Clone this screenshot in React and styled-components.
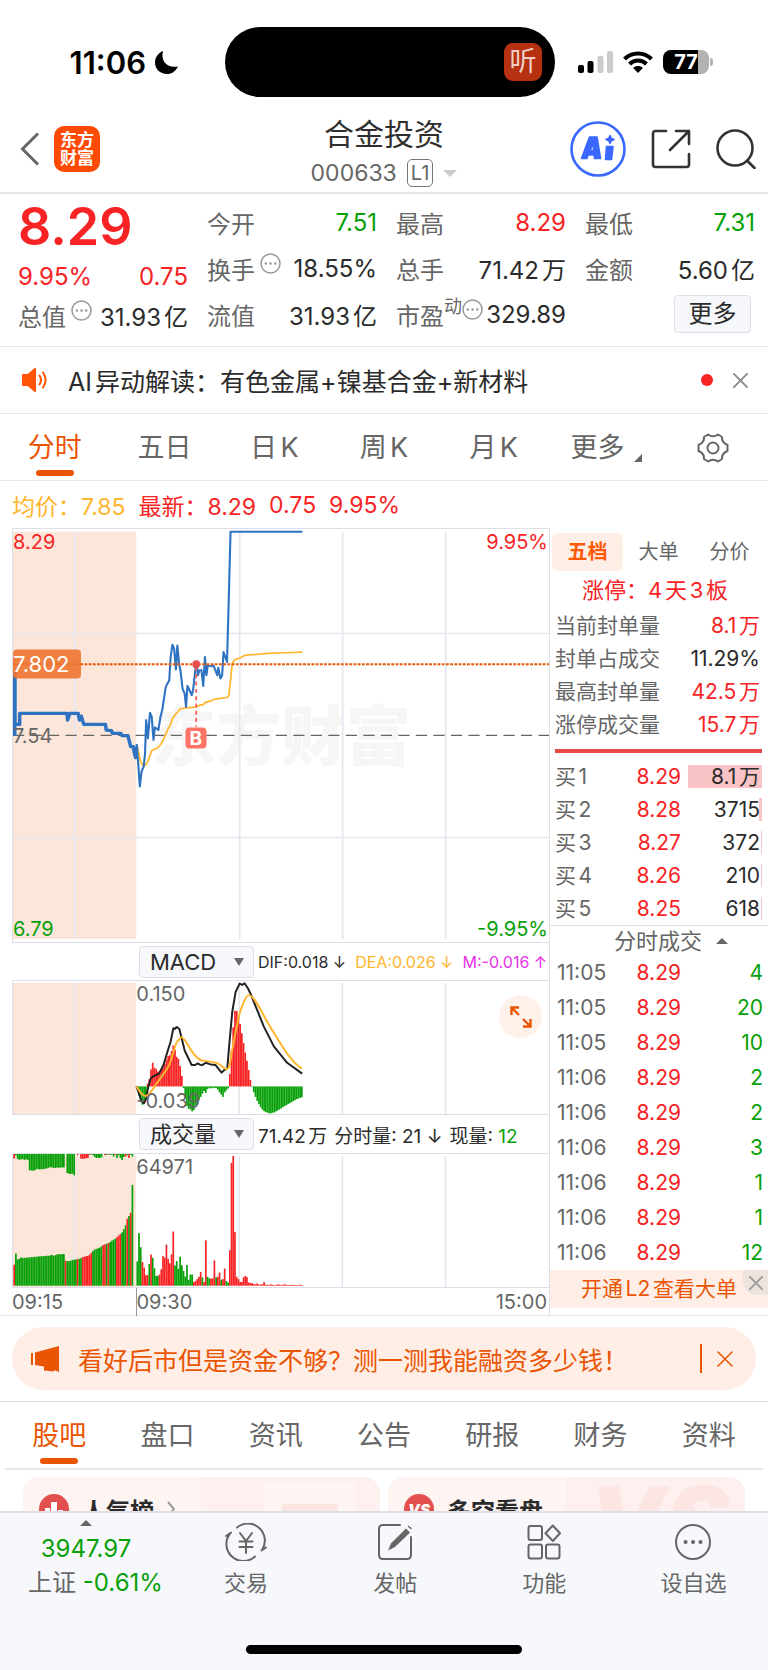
import styled, { createGlobalStyle, css } from 'styled-components'

const RED = '#f72324'
const GREEN = '#08a008'
const ORANGE = '#ea5504'
const YELLOW = '#ffb62e'
const DARK = '#2b2b2b'
const GRAY = '#666'
const LINE = '#e6e6ea'

const tones = { red: RED, green: GREEN, orange: ORANGE, yellow: YELLOW, dark: DARK, gray: GRAY, pink: '#e832e8' }

const GlobalStyle = createGlobalStyle`
  * { box-sizing: border-box; }
  body {
    margin: 0;
    background: #fff;
    color: ${DARK};
    font-family: Inter, "Noto Sans CJK SC", sans-serif;
    text-autospace: normal;
  }
  button, select {
    margin: 0;
    padding: 0;
    border: 0;
    background: none;
    color: inherit;
    font: inherit;
    cursor: pointer;
  }
  a { color: inherit; text-decoration: none; }
  svg { display: block; flex: none; }
  table { width: 100%; border-collapse: collapse; }
  td, th { padding: 0; font-weight: 400; }
`

const Page = styled.div`
  display: flex;
  flex-direction: column;
  height: 100vh;
`

const Content = styled.main`
  flex: 1;
  min-height: 0;
  overflow: hidden;
`

const Tone = styled.span`
  color: ${p => tones[p.$tone]};
`

/* status bar */

const StatusBar = styled.div`
  display: grid;
  grid-template-columns: 225fr 330px 213fr;
  align-items: center;
  padding-top: 27px;
`

const Clock = styled.div`
  display: flex;
  align-items: center;
  justify-content: flex-end;
  gap: 8px;
  padding-right: 46px;
  color: #000;
  font-size: 31px;
  font-weight: 600;
  white-space: nowrap;
`

const Island = styled.div`
  display: flex;
  align-items: center;
  justify-content: flex-end;
  height: 70px;
  padding-right: 13px;
  border-radius: 35px;
  background: #000;
`

const ListenBadge = styled.div`
  width: 38px;
  border-radius: 9px;
  background: #b5310f;
  color: #efcfc5;
  font-size: 27px;
  line-height: 38px;
  text-align: center;
`

const Signals = styled.div`
  display: flex;
  align-items: center;
  gap: 10px;
  padding-left: 23px;
`

const Battery = styled.div`
  display: flex;
  align-items: center;
  gap: 1px;
`

const BatteryBody = styled.div`
  width: 46px;
  border-radius: 8px;
  background: linear-gradient(to right, #000 77%, #b3b3b3 77%);
  color: #fff;
  font-size: 20px;
  font-weight: 700;
  line-height: 24px;
  text-align: center;
`

const BatteryTip = styled.div`
  width: 3px;
  height: 8px;
  border-radius: 0 3px 3px 0;
  background: #b3b3b3;
`

/* title bar */

const Header = styled.header`
  display: grid;
  grid-template-columns: 1fr auto 1fr;
  align-items: center;
  padding: 17px 12px 0;
  border-bottom: 2px solid ${LINE};
`

const HeaderSide = styled.div`
  display: flex;
  align-items: center;
  justify-content: ${p => (p.$end ? 'flex-end' : 'flex-start')};
  gap: ${p => (p.$end ? 25 : 14)}px;
  padding: 0 0 8px ${p => (p.$end ? 0 : 8)}px;
`

const Logo = styled.a`
  display: block;
  padding: 5px 0;
  width: 46px;
  border-radius: 10px;
  background: #ff4a03;
  color: #fff;
  font-size: 17px;
  font-weight: 700;
  line-height: 18px;
  text-align: center;
`

const Title = styled.h1`
  margin: 0;
  color: #2f2f2f;
  font-size: 30px;
  font-weight: 400;
  line-height: 40px;
  text-align: center;
`

const SubTitle = styled.div`
  display: flex;
  align-items: center;
  justify-content: center;
  gap: 10px;
  height: 38px;
  color: ${GRAY};
  font-size: 23px;
`

const Level = styled.span`
  padding: 0 3px;
  border: 1px solid #777;
  border-radius: 5px;
  font-size: 20px;
  line-height: 26px;
`

const Triangle = styled.i`
  width: 0;
  height: 0;
  border: ${p => p.$size || 6}px solid transparent;
  ${p => (p.$up ? 'border-top-width: 0; border-bottom-color' : 'border-bottom-width: 0; border-top-color')}: ${p => p.$color || GRAY};
`

/* quote block */

const Quote = styled.section`
  display: grid;
  grid-template-columns: repeat(4, 1fr);
  column-gap: 19px;
  padding: 5px 13px 9px 18px;
  border-bottom: 1px solid ${LINE};
  font-size: 24px;
`

const QuoteColumn = styled.div`
  display: grid;
  align-content: start;
  grid-template-rows: ${p => (p.$main ? '56px 42px 36px' : 'repeat(3, 46px)')};
`

const Price = styled.strong`
  color: ${RED};
  font-size: 52px;
  font-weight: 600;
  line-height: 56px;
`

const Stat = styled.div`
  display: flex;
  align-items: center;
  justify-content: space-between;
  white-space: nowrap;
  color: ${p => tones[p.$tone || 'dark']};
`

const StatLabel = styled.span`
  display: flex;
  align-items: center;
  gap: 5px;
  color: ${GRAY};

  sup {
    align-self: flex-start;
    margin: 0 -5px;
    font-size: 18px;
    line-height: 20px;
  }
`

const MoreButton = styled.button`
  align-self: center;
  justify-self: end;
  width: 77px;
  height: 38px;
  margin-right: 4px;
  border: 1px solid #dcdfe6;
  border-radius: 4px;
  background: #f7f8fb;
  line-height: 34px;
`

const Notice = styled.section`
  display: flex;
  align-items: center;
  height: 67px;
  padding: 0 20px 0 22px;
  border-bottom: 1px solid ${LINE};
  font-size: 25px;
`

const NoticeText = styled.a`
  flex: 1;
  padding-left: 21px;
`

const RedDot = styled.i`
  width: 12px;
  height: 12px;
  margin-right: 20px;
  border-radius: 50%;
  background: ${RED};
`

/* tabs */

const Tabs = styled.nav`
  display: grid;
  grid-template-columns: repeat(7, 1fr);
  height: ${p => (p.$inset ? 68 : 67)}px;
  margin: 0 ${p => (p.$inset ? 5 : 0)}px;
  border-bottom: ${p => (p.$inset ? 2 : 1)}px solid ${LINE};
`

const Tab = styled.button`
  display: flex;
  flex-direction: column;
  align-items: center;
  justify-content: flex-end;
  color: ${p => (p.$active ? ORANGE : GRAY)};
  font-size: 27px;
  line-height: 40px;

  &::after {
    content: '';
    width: 38px;
    height: 6px;
    margin: 2px 0 4px;
    border-radius: 3px;
    background: ${p => (p.$active ? ORANGE : 'transparent')};
  }
`

const TabMore = styled.span`
  display: flex;
  align-items: flex-end;
  gap: 10px;
  padding-left: 6px;

  svg { margin-bottom: 6px; }
`

const LatestLine = styled.div`
  display: flex;
  align-items: center;
  gap: 13px;
  height: 47px;
  padding-left: 12px;
  color: ${RED};
  font-size: 23px;
`

/* charts */

const Board = styled.section`
  display: grid;
  grid-template-columns: 1fr 219px;
  padding-left: 12px;
  border-bottom: 1px solid ${LINE};
`

const Charts = styled.div`
  min-width: 0;
`

const Plot = styled.div`
  position: relative;
  height: ${p => p.$height}px;
  border: solid #dcdfe6;
  border-width: 1px 0 1px 1px;

  > svg {
    width: 100%;
    height: 100%;
  }
`

const corners = {
  topLeft: 'top: 0; left: 0;',
  topRight: 'top: 0; right: 1px;',
  bottomLeft: 'bottom: 0; left: 0;',
  bottomRight: 'bottom: 0; right: 1px;',
  open: 'top: 0; left: 23%;',
  openBottom: 'bottom: 0; left: 23%;',
}

const AxisLabel = styled.span`
  position: absolute;
  ${p => corners[p.$at]}
  color: ${p => tones[p.$tone || 'gray']};
  font-size: 20px;
  line-height: 26px;
`

const Watermark = styled.div`
  position: absolute;
  top: 50%;
  left: 50%;
  transform: translate(-50%, -50%);
  color: #f6f6f7;
  font-size: 65px;
  font-weight: 900;
  line-height: 65px;
  white-space: nowrap;
`

const LineLabel = styled.span`
  position: absolute;
  top: ${p => p.$top};
  left: 0;
  transform: translateY(-50%);
  color: ${GRAY};
  font-size: 20px;
  line-height: 26px;

  ${p => p.$cost && css`
    width: 68px;
    border-radius: 4px;
    background: rgba(238, 115, 48, 0.9);
    color: #fff;
    font-size: 22px;
    line-height: 29px;
  `}
`

const BuyMark = styled.span`
  position: absolute;
  top: 50.6%;
  left: 34.1%;
  width: 21px;
  transform: translate(-50%, -50%);
  border-radius: 4px;
  background: #ff7468;
  color: #fff;
  font-size: 19px;
  font-weight: 700;
  line-height: 21px;
  text-align: center;
`

const ExpandButton = styled.button`
  position: absolute;
  top: 14px;
  right: 7px;
  display: grid;
  place-items: center;
  width: 43px;
  height: 43px;
  border-radius: 50%;
  background: #fef1ea;
`

const Toolbar = styled.div`
  display: flex;
  align-items: center;
  height: ${p => p.$height}px;
  padding-left: 127px;
  gap: 4px;
  font-size: ${p => p.$size}px;
  white-space: nowrap;
`

const Readings = styled.div`
  display: flex;
  gap: ${p => p.$gap}px;
`

const SelectBox = styled.label`
  position: relative;
  flex: none;
  width: 115px;

  select {
    display: block;
    width: 100%;
    height: 32px;
    padding-left: 10px;
    border: 1px solid #dcdfe6;
    border-radius: 4px;
    background: #f7f8fb;
    appearance: none;
    font-size: 22px;
  }

  i {
    position: absolute;
    top: 12px;
    right: 10px;
    border-width: 8px 5px 0;
    pointer-events: none;
  }
`

const TimeAxis = styled.div`
  display: grid;
  grid-template-columns: 23fr 77fr;
  height: 27px;
  color: ${GRAY};
  font-size: 20px;
  line-height: 28px;

  span:last-child {
    display: flex;
    justify-content: space-between;
    padding-right: 2px;
    border-left: 1px solid #999;
  }
`

/* order book */

const Book = styled.aside`
  padding: 5px 0;
  border-left: 1px solid #dcdfe6;
  font-size: 21px;
`

const BookTabs = styled.div`
  display: grid;
  grid-template-columns: repeat(3, 71px);
  padding-left: 2px;
`

const BookTab = styled.button`
  border-radius: 6px;
  background: ${p => (p.$active ? '#feeee6' : 'none')};
  color: ${p => (p.$active ? '#ff5a05' : GRAY)};
  font-size: 20px;
  font-weight: ${p => (p.$active ? 700 : 400)};
  line-height: 38px;
`

const LimitUp = styled.div`
  color: ${RED};
  font-size: 22px;
  line-height: 38px;
  text-align: center;
  padding-right: 8px;
`

const BookTable = styled.table`
  td, th {
    height: ${p => p.$row}px;
    line-height: ${p => p.$row}px;
    text-align: right;
    white-space: nowrap;
  }

  th {
    padding-left: ${p => p.$inset}px;
    color: ${GRAY};
    text-align: left;
  }

  td:nth-child(3) {
    width: 87px;
  }

  td:last-child {
    padding-right: ${p => p.$end}px;
  }
`

const VolumeBar = styled.span`
  display: block;
  margin-left: 7px;
  padding-right: 2px;
  line-height: 23px;
  background: linear-gradient(to left, #fac4c6 ${p => p.$share}%, transparent ${p => p.$share}%);
`

const RedRule = styled.hr`
  height: 4px;
  margin: 8px 6px 7px 5px;
  border: 0;
  background: #e94848;
`

const TradesTitle = styled.button`
  display: flex;
  align-items: center;
  justify-content: center;
  gap: 14px;
  width: 100%;
  height: 30px;
  padding-left: 24px;
  border-top: 1px solid #dcdfe6;
  color: ${GRAY};
  font-size: 22px;
  line-height: 28px;
`

const LevelTwo = styled.div`
  display: flex;
  background: #feeee6;
  color: ${ORANGE};
  line-height: 38px;

  a {
    flex: 1;
    padding-left: 31px;
    white-space: nowrap;
  }
`

const CornerClose = styled.button`
  display: grid;
  place-items: center;
  width: 25px;
  height: 25px;
  border-bottom-left-radius: 14px;
  background: #ece2de;
`

/* promo and lower tabs */

const Promo = styled.section`
  padding: 11px 12px;
  border-bottom: 1px solid #dedee2;
`

const PromoPill = styled.div`
  display: flex;
  align-items: center;
  height: 63px;
  padding: 0 23px 0 19px;
  border-radius: 32px;
  background: #feeee6;
  color: ${ORANGE};
  font-size: 25px;

  a {
    flex: 1;
    padding-left: 19px;
  }

  button {
    display: flex;
    align-items: center;
    height: 29px;
    padding-left: 15px;
    border-left: 2px solid ${ORANGE};
  }
`

const Cards = styled.div`
  display: grid;
  grid-template-columns: 1fr 1fr;
  gap: 8px;
  padding: 7px 23px;
`

const Card = styled.a`
  display: flex;
  align-items: center;
  gap: 13px;
  height: 110px;
  padding: 0 16px 46px;
  border-radius: 16px;
  background: linear-gradient(to right, #fef5f3 50%, #fdf0ee 50%);
  font-size: 24px;
  font-weight: 700;

  > svg:last-child {
    align-self: flex-start;
    margin: 5px 8px 0 auto;
  }
`

const CardBadge = styled.span`
  display: grid;
  place-items: center;
  width: 30px;
  height: 30px;
  border-radius: 50%;
  background: #e2504d;
  color: #fff;
  font-size: 15px;
  font-style: italic;
  font-weight: 900;
`

const CardArt = styled.span`
  align-self: flex-start;
  margin-left: auto;
  color: #fbe6e3;
  font-size: 96px;
  font-style: italic;
  font-weight: 900;
  line-height: 88px;
`

/* bottom bar */

const Footer = styled.footer`
  border-top: 2px solid #dddfe4;
  background: #f7f8fb;
  padding-bottom: 16px;
`

const Actions = styled.div`
  display: grid;
  grid-template-columns: 1.15fr repeat(4, 1fr);
  height: 132px;
`

const IndexLink = styled.a`
  padding: 7px 0 0 28px;
  color: ${GREEN};
  font-size: 24px;
  line-height: 34px;
  white-space: nowrap;
`

const IndexValue = styled.span`
  display: flex;
  flex-direction: column;
  align-items: center;
  gap: 6px;
  width: 116px;
`

const Action = styled.button`
  display: flex;
  flex-direction: column;
  align-items: center;
  gap: 5px;
  padding-top: 10px;
  color: ${GRAY};
  font-size: 22px;
  line-height: 34px;
`

const HomeBar = styled.div`
  width: 36%;
  height: 9px;
  margin: 0 auto;
  border-radius: 5px;
  background: #000;
`

const Cross = ({ size, color, width = 2 }) => (
  <svg width={size} height={size} viewBox="0 0 16 16" fill="none" stroke={color} strokeWidth={width} strokeLinecap="round">
    <path d="M1 1l14 14M15 1L1 15" />
  </svg>
)

const DotsIcon = styled.svg`
  margin-bottom: 9px;
`

const Dots = () => (
  <DotsIcon width="21" height="21" viewBox="0 0 21 21" fill="none" stroke="#999" strokeWidth="1.500">
    <circle cx="10.500" cy="10.500" r="9.500" />
    <path d="M5.800 10.500h.1M10.500 10.500h.1M15.200 10.500h.1" strokeWidth="2.400" strokeLinecap="round" />
  </DotsIcon>
)

const SHADE = '#fce6da'
const GRID = '#e4e7ef'

// minute bars share one slot width, in chart units
const SLOT = 5.15
const OPEN_X = 371

const macd = [
  -5, -28, -45, -56, -45, -28, 8, 22, 52, 72, 57, 53, 45, 46, 50, 58, 68, 82, 92, 95, 108, 124, 112, 90, 84, 62, 32,
  -5, -35, -60, -68, -70, -76, -72, -58, -55, -42, -32, -22, -14, -20, -8, -5, -6, -4, -5, -5, -10, -18, -25, -32, -18, -12, -6,
  38, 110, 180, 230, 230, 210, 190, 162, 132, 103, 78, 50, 20, -2, -18, -32, -44, -54, -63, -70, -75, -78, -80, -82, -82, -80, -79,
  -76, -73, -70, -67, -63, -60, -57, -54, -51, -48, -45, -42, -39, -37, -35, -33,
]

const DIF = '371,321 379,344 386,366 394,372 400,359 406,324 414,296 424,289 439,282 452,256 464,216 474,184 482,144 487,146 492,140 500,146 507,174 516,212 529,239 537,256 546,256 556,251 562,255 569,256 579,249 594,254 609,256 619,269 627,279 634,272 644,266 650,194 659,94 669,34 681,8 689,12 696,7 706,22 716,44 734,89 754,139 784,199 824,249 869,282'
const DEA = 'M371 321C384 342 390 350 399 350S420 330 429 316S460 275 469 256S488 188 494 184S503 170 507 171C515 172 527 198 534 209S555 240 569 242S605 247 614 250S635 270 644 268S654 235 659 209S678 105 684 89S700 42 709 43C726 45 750 100 764 124S815 210 834 234S860 262 869 266'

// volume of each minute since the open: R closed higher, G lower
const volumes = '74G 160G 117G 72R 55R 32R 32R 66G 95R 85G 53G 30G 30G 34R 50R 90R 85R 125R 82R 68R 95R 165R 62G 75G 52G 88G 62G 45G 28G 63G 18G 34G 34G 11R 14R 20R 27R 42R 25G 11R 138R 27G 22G 22R 22R 77R 25G 27R 40R 18G 20R 52R 14G 9G 108R 374R 395R 163R 27R 20R 12R 11R 25R 30R 26R 10R 8R 8R 5R 4R 7R 3R 4R 4R 11R 3R 3R 2R 4R 3R 2R 2R 4R 3R 2R 3R 4R 3R 2R 2R 3R 2R 2R 2R 2R 3R 2R'
  .split(' ')
  .map(v => ({ h: parseInt(v, 10), up: v.endsWith('R') }))

const matched = [
  64, 98, 80, 82, 86, 84, 85, 85, 86, 86, 87, 87, 88, 88, 89, 89, 90, 90, 90, 91, 91, 92, 94, 91, 93, 95, 96, 96, 96, 96,
  76, 75, 75, 76, 78, 79, 80, 81, 82, 84, 87, 88, 90, 91, 94, 100, 106, 110, 112, 114, 116, 120, 124, 126, 128, 130, 133, 137, 140, 143, 148,
  153, 157, 162, 172, 184, 204, 212, 222, 307,
]
const matchedUp = [0, 30, 37, 40, 41, 42, 43, 44, 45, 52, 53, 55, 60, 61, 62, 66, 68]
const unmatched = [
  14, 4, 15, 18, 16, 16, 18, 16, 18, 50, 50, 51, 50, 46, 46, 47, 46, 46, 45, 44, 42, 40, 41, 42, 43, 41, 42, 41, 41, 41,
  0, 58, 60, 61, 60, 65, 0, 4, 0, 14, 15, 14, 13, 12, 3, 2, 4, 9, 12, 11, 12, 10, 0, 4, 3, 2, 3, 2, 8, 3, 12, 4, 12, 18, 9, 8, 4, 12, 3, 8,
]
const unmatchedUp = [0, 37, 39, 40, 41, 42, 43, 45, 53, 55, 59, 65, 67]

const PRICE = '387,672 392,740 396,800 401,755 407,740 411,700 414,600 419,655 425,578 430,590 435,660 439,622 449,630 455,590 460,570 470,500 480,480 484,410 489,373 494,385 499,447 503,375 508,430 512,450 518,505 524,520 528,560 532,497 538,510 544,525 548,510 557,425 562,465 566,450 572,450 577,497 582,410 586,465 590,435 600,438 606,435 612,450 617,465 620,442 626,475 631,465 635,395 640,410 645,425 650,230 655,32 860,32'
const AUCTION = '39,455 39,613 53,613 53,580 188,580 190,600 196,580 220,580 224,600 229,588 236,613 298,613 300,630 315,632 318,640 342,640 345,647 362,647 366,663 370,680 378,680 380,697 384,713 387,680'
const AVERAGE = '387,672 393,700 398,725 405,736 412,736 420,722 430,692 445,685 455,675 465,655 475,630 484,612 489,595 500,580 512,566 530,563 557,560 570,554 577,554 584,546 600,542 606,538 630,534 645,532 650,526 655,480 660,430 666,418 682,413 698,404 730,402 760,399 810,397 860,395'

const PriceLines = styled.svg`
  position: relative;
`

function PriceChart() {
  return (
    <Plot $height={415}>
      <Watermark>东方财富</Watermark>
      <PriceLines viewBox="34 24 1530 1245" preserveAspectRatio="none" fill="none">
        <rect x="34" y="32" width="352" height="1228" fill={SHADE} />
        <path d="M210 32v1228M681 32v1228M975 32v1228M1269 32v1228M34 339h1530M34 954h1530" stroke={GRID} strokeWidth="5" />
        <path d="M34 646h1530" stroke="#666" strokeWidth="4" strokeDasharray="32 18" />
        <polyline points={AVERAGE} stroke={YELLOW} strokeWidth="5" strokeLinejoin="round" />
        <polyline points={AUCTION} stroke="#2e72c2" strokeWidth="10" strokeLinejoin="round" />
        <path d="M39 455v192" stroke="#2e72c2" strokeWidth="10" />
        <polyline points={PRICE} stroke="#2e72c2" strokeWidth="6" strokeLinejoin="round" />
        <path d="M34 432h1530" stroke={ORANGE} strokeWidth="6" strokeDasharray="8 4" />
        <path d="M557 440v180" stroke="#f55" strokeWidth="5" strokeDasharray="12 10" />
        <ellipse cx="557" cy="432" rx="11" ry="12" fill="#e8504a" />
      </PriceLines>
      <LineLabel $top="50%">7.54</LineLabel>
      <LineLabel $top="32.8%" $cost>7.802</LineLabel>
      <BuyMark>B</BuyMark>
      <AxisLabel $at="topLeft" $tone="red">8.29</AxisLabel>
      <AxisLabel $at="topRight" $tone="red">9.95%</AxisLabel>
      <AxisLabel $at="bottomLeft" $tone="green">6.79</AxisLabel>
      <AxisLabel $at="bottomRight" $tone="green">-9.95%</AxisLabel>
    </Plot>
  )
}

function Grid() {
  return (
    <>
      <rect x="0" y="6" width="370" height="399" fill={SHADE} />
      <path d="M185 6v399M680 6v399M990 6v399M1300 6v399" stroke={GRID} strokeWidth="5" />
    </>
  )
}

function MacdChart() {
  return (
    <Plot $height={135}>
      <svg viewBox="0 0 1611 405" preserveAspectRatio="none" fill="none">
        <Grid />
        {macd.map((v, i) => (
          <rect key={i} x={OPEN_X + i * SLOT} y={v > 0 ? 321 - v : 321} width={SLOT} height={Math.abs(v)} fill={v > 0 ? RED : GREEN} />
        ))}
        <polyline points={DIF} stroke="#222" strokeWidth="6" strokeLinejoin="round" />
        <path d={DEA} stroke={YELLOW} strokeWidth="6" />
      </svg>
      <AxisLabel $at="open">0.150</AxisLabel>
      <AxisLabel $at="openBottom">-0.039</AxisLabel>
      <ExpandButton aria-label="全屏">
        <svg width="22" height="22" viewBox="0 0 22 22" fill="none" stroke={ORANGE} strokeWidth="2.400">
          <path d="M1.500 9V1.500H9M2 2l7 7M13 20.500h7.500V13M20 20l-7-7" />
        </svg>
      </ExpandButton>
    </Plot>
  )
}

function VolumeChart() {
  return (
    <Plot $height={135}>
      <svg viewBox="0 0 1611 405" preserveAspectRatio="none">
        <Grid />
        {matched.map((h, i) => (
          <rect key={i} x={1 + i * SLOT} y={401 - h} width={SLOT} height={h} fill={matchedUp.includes(i) ? RED : GREEN} />
        ))}
        {unmatched.map((h, i) => (
          <rect key={i} x={1 + i * SLOT} y="0" width={SLOT} height={h} fill={unmatchedUp.includes(i) ? RED : GREEN} />
        ))}
        {volumes.map((v, i) => (
          <rect key={i} x={OPEN_X + i * SLOT} y={401 - v.h} width={SLOT} height={v.h} fill={v.up ? RED : GREEN} />
        ))}
      </svg>
      <AxisLabel $at="open">64971</AxisLabel>
    </Plot>
  )
}

const seals = [
  ['当前封单量', '8.1万', 'red'],
  ['封单占成交', '11.29%', 'dark'],
  ['最高封单量', '42.5万', 'red'],
  ['涨停成交量', '15.7万', 'red'],
]

const bids = [
  ['买1', '8.29', '8.1万', 100],
  ['买2', '8.28', '3715', 4],
  ['买3', '8.27', '372', 1],
  ['买4', '8.26', '210', 1],
  ['买5', '8.25', '618', 1],
]

const trades = [
  ['11:05', 4], ['11:05', 20], ['11:05', 10], ['11:06', 2], ['11:06', 2],
  ['11:06', 3], ['11:06', 1], ['11:06', 1], ['11:06', 12],
]

function OrderBook() {
  return (
    <Book>
      <BookTabs>
        <BookTab $active>五档</BookTab>
        <BookTab>大单</BookTab>
        <BookTab>分价</BookTab>
      </BookTabs>
      <LimitUp>涨停：4天3板</LimitUp>
      <BookTable $row={33} $inset={5} $end={8}>
        <tbody>
          {seals.map(([label, value, tone]) => (
            <tr key={label}>
              <th scope="row">{label}</th>
              <td><Tone $tone={tone}>{value}</Tone></td>
            </tr>
          ))}
        </tbody>
      </BookTable>
      <RedRule />
      <BookTable $row={33} $inset={5} $end={6}>
        <tbody>
          {bids.map(([label, price, volume, share]) => (
            <tr key={label}>
              <th scope="row">{label}</th>
              <td><Tone $tone="red">{price}</Tone></td>
              <td><VolumeBar $share={share}>{volume}</VolumeBar></td>
            </tr>
          ))}
        </tbody>
      </BookTable>
      <TradesTitle>分时成交<Triangle $up /></TradesTitle>
      <BookTable $row={35} $inset={7} $end={5}>
        <tbody>
          {trades.map(([time, volume], i) => (
            <tr key={i}>
              <th scope="row">{time}</th>
              <td><Tone $tone="red">8.29</Tone></td>
              <td><Tone $tone="green">{volume}</Tone></td>
            </tr>
          ))}
        </tbody>
      </BookTable>
      <LevelTwo>
        <a href="#l2">开通L2查看大单</a>
        <CornerClose aria-label="关闭"><Cross size={14} color="#999" /></CornerClose>
      </LevelTwo>
    </Book>
  )
}

function Picker({ name, options }) {
  return (
    <SelectBox>
      <select aria-label={name} defaultValue={options[0]}>
        {options.map(o => <option key={o}>{o}</option>)}
      </select>
      <Triangle />
    </SelectBox>
  )
}

function Status() {
  return (
    <StatusBar>
      <Clock>
        11:06
        <svg width="25" height="25" viewBox="0 0 25 25">
          <path d="M9 1C6.500 10 12 18.500 24 16.500C21.500 21.500 17.500 24 13 24C6 24 1 19 1 12.500C1 7.500 4 3 9 1z" fill="#000" />
        </svg>
      </Clock>
      <Island><ListenBadge>听</ListenBadge></Island>
      <Signals>
        <svg width="35" height="23" viewBox="0 0 35 23">
          <rect x="0" y="14" width="6" height="8" rx="2" />
          <rect x="9.500" y="10" width="6" height="12" rx="2" />
          <rect x="19.500" y="5" width="6" height="17" rx="2" fill="#ccc" />
          <rect x="29" y="0" width="6" height="22" rx="2" fill="#ccc" />
        </svg>
        <svg width="30" height="22" viewBox="0 0 30 22" fill="none" stroke="#000" strokeWidth="4">
          <path d="M1.500 8C9 0.500 21 0.500 28.500 8M6.500 13C11.500 8.200 18.500 8.200 23.500 13" />
          <path d="M15 22l-4.800-5c2.500-2.600 7.100-2.600 9.600 0z" fill="#000" stroke="none" />
        </svg>
        <Battery>
          <BatteryBody>77</BatteryBody>
          <BatteryTip />
        </Battery>
      </Signals>
    </StatusBar>
  )
}

function TitleBar() {
  return (
    <Header>
      <HeaderSide>
        <button aria-label="返回">
          <svg width="20" height="34" viewBox="0 0 20 34" fill="none" stroke="#666" strokeWidth="3">
            <path d="M18 1.500L2.500 17L18 32.500" />
          </svg>
        </button>
        <Logo href="#home">东方<br />财富</Logo>
      </HeaderSide>
      <div>
        <Title>合金投资</Title>
        <SubTitle>
          000633
          <Level>L1</Level>
          <Triangle $size={7} $color="#ccc" />
        </SubTitle>
      </div>
      <HeaderSide $end>
        <button aria-label="AI">
          <svg width="56" height="56" viewBox="0 0 56 56" fill="none">
            <circle cx="28" cy="28" r="26.500" stroke="#3a68ff" strokeWidth="2.600" />
            <g fill="#3a68ff" stroke="#3a68ff" strokeWidth="1.600" strokeLinejoin="round">
              <path d="M11.500 37.500L19.500 16h7.500l3.500 21.500h-6l-.4-3.500h-6l-1.200 3.500zM20 29.500h3.700l-.6-6.500z" fillRule="evenodd" />
              <path d="M36.500 25.500h6.500l-1.500 13h-6z" />
              <path d="M40 14.500l1.200 2.800l2.800 1.200l-2.800 1.200l-1.200 2.800l-1.200-2.800l-2.800-1.200l2.800-1.200z" />
            </g>
          </svg>
        </button>
        <button aria-label="分享">
          <svg width="40" height="40" viewBox="0 0 40 40" fill="none" stroke="#333" strokeWidth="2.600" strokeLinecap="round" strokeLinejoin="round">
            <path d="M15 2H4.500Q2 2 2 4.500V35.500Q2 38 4.500 38H35.500Q38 38 38 35.500V25M25 2H38V15M38 2L19 21" />
          </svg>
        </button>
        <button aria-label="搜索">
          <svg width="40" height="40" viewBox="0 0 40 40" fill="none" stroke="#333" strokeWidth="2.600" strokeLinecap="round">
            <circle cx="19" cy="19" r="17.500" />
            <path d="M31.500 32l7 7" />
          </svg>
        </button>
      </HeaderSide>
    </Header>
  )
}

function QuotePanel() {
  return (
    <Quote>
      <QuoteColumn $main>
        <Price>8.29</Price>
        <Stat $tone="red"><span>9.95%</span><span>0.75</span></Stat>
        <Stat><StatLabel>总值<Dots /></StatLabel>31.93亿</Stat>
      </QuoteColumn>
      <QuoteColumn>
        <Stat $tone="green"><StatLabel>今开</StatLabel>7.51</Stat>
        <Stat><StatLabel>换手<Dots /></StatLabel>18.55%</Stat>
        <Stat><StatLabel>流值</StatLabel>31.93亿</Stat>
      </QuoteColumn>
      <QuoteColumn>
        <Stat $tone="red"><StatLabel>最高</StatLabel>8.29</Stat>
        <Stat><StatLabel>总手</StatLabel>71.42万</Stat>
        <Stat><StatLabel>市盈<sup>动</sup><Dots /></StatLabel>329.89</Stat>
      </QuoteColumn>
      <QuoteColumn>
        <Stat $tone="green"><StatLabel>最低</StatLabel>7.31</Stat>
        <Stat><StatLabel>金额</StatLabel>5.60亿</Stat>
        <MoreButton>更多</MoreButton>
      </QuoteColumn>
    </Quote>
  )
}

function BottomBar() {
  return (
    <Footer>
      <Actions>
        <IndexLink href="#index">
          <IndexValue>
            <Triangle $up />
            3947.97
          </IndexValue>
          <Tone $tone="gray">上证</Tone> -0.61%
        </IndexLink>
        <Action>
          <svg width="42" height="38" viewBox="0 0 42 38" fill="none" stroke={GRAY} strokeWidth="2" strokeLinecap="round">
            <path d="M12 4.500A17 17 0 0 1 37 27M30 33.500A17 17 0 0 1 5.500 10M1 13l5-3.500M41 24.500l-4.500 3" />
            <path d="M15 10l6 8l6-8M14.500 18.500h13M14.500 24h13M21 18.500V30" />
          </svg>
          交易
        </Action>
        <Action>
          <svg width="36" height="38" viewBox="0 0 36 38" fill="none" stroke={GRAY} strokeWidth="2" strokeLinecap="round">
            <path d="M23 2H6Q2 2 2 6V32Q2 36 6 36H30Q34 36 34 32V14" />
            <path d="M12.500 26l2-5L29 6.500l3 3L17.500 23.500zM31.500 3.500l2.500 2" fill={GRAY} strokeWidth="1.500" />
          </svg>
          发帖
        </Action>
        <Action>
          <svg width="34" height="38" viewBox="0 0 34 38" fill="none" stroke={GRAY} strokeWidth="2" strokeLinejoin="round">
            <rect x="1.500" y="3" width="13.500" height="14" rx="2" />
            <rect x="1.500" y="21.500" width="13.500" height="14" rx="2" />
            <rect x="19" y="21.500" width="13.500" height="14" rx="2" />
            <path d="M25.800 2.500L33 10.200L25.800 18L18.500 10.200z" />
          </svg>
          功能
        </Action>
        <Action>
          <svg width="38" height="38" viewBox="0 0 38 38" fill="none" stroke={GRAY} strokeWidth="2">
            <circle cx="19" cy="19" r="17" />
            <path d="M11.500 19h.1M19 19h.1M26.500 19h.1" strokeWidth="4" strokeLinecap="round" />
          </svg>
          设自选
        </Action>
      </Actions>
      <HomeBar />
    </Footer>
  )
}

export default function App() {
  return (
    <Page>
      <GlobalStyle />
      <Content>
        <Status />
        <TitleBar />
        <QuotePanel />
        <Notice>
          <svg width="25" height="26" viewBox="0 0 25 26" fill="none" stroke="#ff5505" strokeWidth="2" strokeLinecap="round">
            <path d="M1 8h5l7-6v22l-7-6H1z" fill="#ff5505" strokeLinejoin="round" />
            <path d="M17.500 8.500c2 3 2 6 0 9M21 5.500c3.500 5 3.500 10 0 15" />
          </svg>
          <NoticeText href="#news">AI异动解读：有色金属+镍基合金+新材料</NoticeText>
          <RedDot />
          <button aria-label="关闭"><Cross size={15} color="#888" /></button>
        </Notice>
        <Tabs>
          <Tab $active>分时</Tab>
          <Tab>五日</Tab>
          <Tab>日K</Tab>
          <Tab>周K</Tab>
          <Tab>月K</Tab>
          <Tab>
            <TabMore>
              更多
              <svg width="8" height="8" viewBox="0 0 8 8"><path d="M8 0v8H0z" fill={GRAY} /></svg>
            </TabMore>
          </Tab>
          <Tab aria-label="设置">
            <svg width="32" height="40" viewBox="0 -5 32 40" fill="none" stroke={GRAY} strokeWidth="2" strokeLinejoin="round">
              <path d="M11 1.500Q16 5 21 1.500L25 4Q24.500 9.500 30.500 12V18Q24.500 20.500 25 26L21 28.500Q16 25 11 28.500L7 26Q7.500 20.500 1.500 18V12Q7.500 9.500 7 4z" />
              <circle cx="16" cy="15" r="5.500" />
            </svg>
          </Tab>
        </Tabs>
        <LatestLine>
          <Tone $tone="yellow">均价：7.85</Tone>
          <span>最新：8.29</span>
          <span>0.75</span>
          <span>9.95%</span>
        </LatestLine>
        <Board>
          <Charts>
            <PriceChart />
            <Toolbar $height={37} $size={16}>
              <Picker name="副图指标" options={['MACD', 'KDJ', 'RSI']} />
              <Readings $gap={9}>
                <span>DIF:0.018 ↓</span>
                <Tone $tone="yellow">DEA:0.026 ↓</Tone>
                <Tone $tone="pink">M:-0.016 ↑</Tone>
              </Readings>
            </Toolbar>
            <MacdChart />
            <Toolbar $height={38} $size={19}>
              <Picker name="成交指标" options={['成交量', '成交额']} />
              <Readings $gap={7}>
                <span>71.42万</span>
                <span>分时量: 21 ↓</span>
                <span>现量: <Tone $tone="green">12</Tone></span>
              </Readings>
            </Toolbar>
            <VolumeChart />
            <TimeAxis>
              <span>09:15</span>
              <span><time>09:30</time><time>15:00</time></span>
            </TimeAxis>
          </Charts>
          <OrderBook />
        </Board>
        <Promo>
          <PromoPill>
            <svg width="28" height="26" viewBox="0 0 28 26" fill={ORANGE}>
              <path d="M0 7h2v12H0zM4 6.500L28 0v26l-5-2v1.500l-10-1V20.500L4 19z" />
            </svg>
            <a href="#margin">看好后市但是资金不够？测一测我能融资多少钱！</a>
            <button aria-label="关闭"><Cross size={16} color={ORANGE} width={1.5} /></button>
          </PromoPill>
        </Promo>
        <Tabs $inset>
          <Tab $active>股吧</Tab>
          {['盘口', '资讯', '公告', '研报', '财务', '资料'].map(name => <Tab key={name}>{name}</Tab>)}
        </Tabs>
        <Cards>
          <Card href="#rank">
            <CardBadge>
              <svg width="18" height="18" viewBox="0 0 18 18" fill="#fff"><path d="M0 8h5v9H0zM6 2h6v15H6zM13 10h5v7h-5z" /></svg>
            </CardBadge>
            人气榜
            <svg width="8" height="16" viewBox="0 0 8 16" fill="none" stroke="#999" strokeWidth="2"><path d="M1 1l6 7l-6 7" /></svg>
            <svg width="92" height="60" viewBox="0 0 92 60">
              <path d="M0 0h92v60H0z" fill="#fef5f3" />
              <path d="M18 22h56v38H18z" fill="#fbe6e3" />
            </svg>
          </Card>
          <Card href="#vote">
            <CardBadge>VS</CardBadge>
            多空看盘
            <CardArt aria-hidden="true">VS</CardArt>
          </Card>
        </Cards>
      </Content>
      <BottomBar />
    </Page>
  )
}
